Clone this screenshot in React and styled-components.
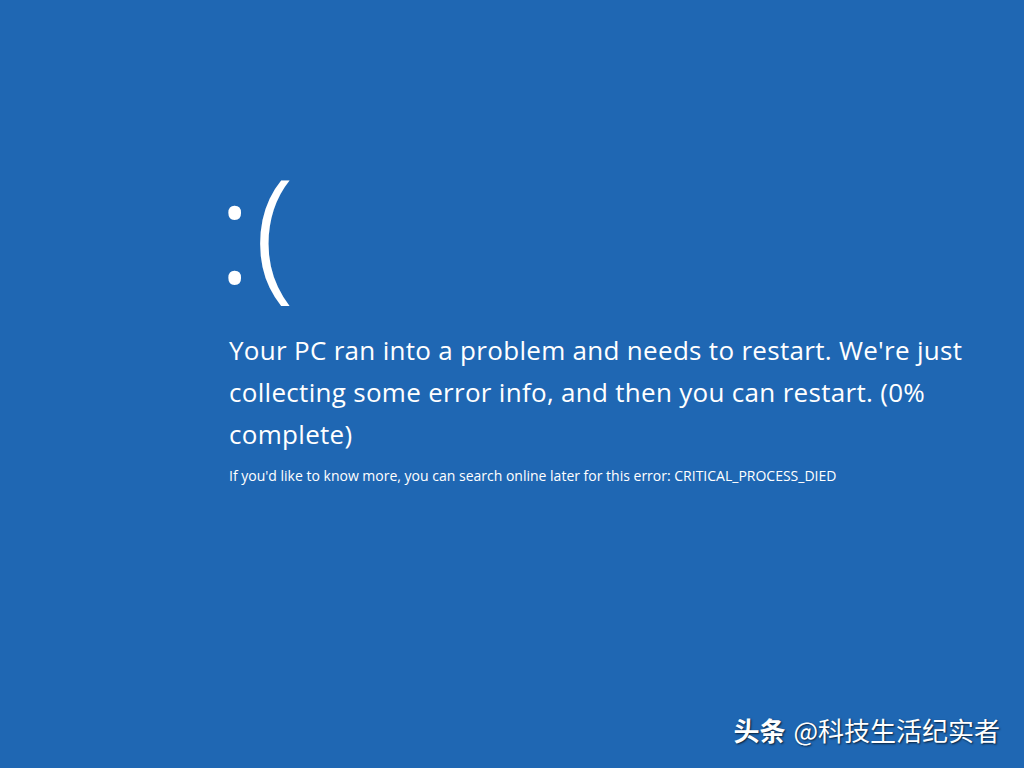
import React from 'react';
import styled, { createGlobalStyle } from 'styled-components';

const GlobalStyle = createGlobalStyle`
    html, body {
        margin: 0;
        padding: 0;
        background: #1f67b3;
    }
`;

const Screen = styled.main`
    position: relative;
    width: 1024px;
    height: 768px;
    overflow: hidden;
    background: #1f67b3;
    color: #ffffff;
    font-family: "Open Sans", "Noto Sans", sans-serif;
    display: flex;
    flex-direction: column;
    padding: 155px 0 0 217px;
    box-sizing: border-box;
`;

const Frown = styled.div`
    font-family: "Noto Sans", "Open Sans", sans-serif;
    font-weight: 300;
    font-size: 144px;
    line-height: 1;
    height: 170px;
    margin-bottom: 4px;
    letter-spacing: 2px;
`;

const Message = styled.p`
    margin: 0;
    padding-left: 12px;
    width: 745px;
    font-size: 26px;
    letter-spacing: 0.3px;
    line-height: 42px;
    font-weight: 400;
`;

const Detail = styled.p`
    margin: 12px 0 0;
    padding-left: 12px;
    font-size: 14px;
    line-height: 18px;
`;

const Watermark = styled.div`
    position: absolute;
    right: 24px;
    bottom: 25px;
    font-family: "Noto Sans CJK SC", sans-serif;
    font-size: 26px;
    line-height: 1;
    text-shadow: 1px 1px 2px rgba(0, 0, 0, 0.7);
`;

const Brand = styled.span`
    font-weight: 700;
    margin-right: 8px;
`;

const BlueScreen = () => {
    return (
        <Screen>
            <Frown>:(</Frown>
            <Message>
                Your PC ran into a problem and needs to restart. We're just
                collecting some error info, and then you can restart. (0%
                complete)
            </Message>
            <Detail>
                If you'd like to know more, you can search online later for this error: CRITICAL_PROCESS_DIED
            </Detail>
            <Watermark>
                <Brand>头条</Brand>@科技生活纪实者
            </Watermark>
        </Screen>
    )
}

const App = () => (
    <>
        <GlobalStyle />
        <BlueScreen />
    </>
);

export default App;
